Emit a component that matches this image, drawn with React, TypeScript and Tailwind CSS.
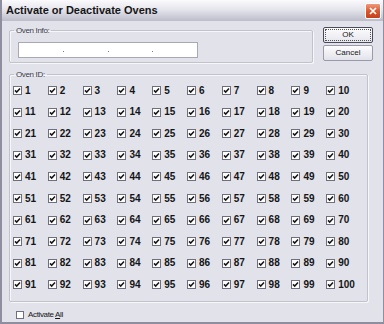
import React from "react";

const ids = Array.from({ length: 100 }, (_, i) => i + 1);

function Check({ checked, size = 9 }: { checked: boolean; size?: number }) {
  return (
    <div
      className="shrink-0 border border-[#6e6e7e] bg-white flex items-center justify-center"
      style={{ width: size, height: size }}
    >
      {checked && (
        <svg width="7" height="7" viewBox="0 0 7 7">
          <path d="M1 3.4 L2.7 5.1 L6 1.6" fill="none" stroke="#151515" strokeWidth="1.5" />
        </svg>
      )}
    </div>
  );
}

export default function App() {
  return (
    <div className="w-[384px] h-[324px] flex flex-col bg-[#e2e2ea] border-l-2 border-r border-b-2 border-[#8e8ea0] font-['Liberation_Sans',Arial,sans-serif] text-[#151515] overflow-hidden">
      {/* Title bar */}
      <div className="h-[21px] shrink-0 flex items-center justify-between pl-[4px] pr-[2px] bg-gradient-to-b from-[#fbfbfd] via-[#e2e2ea] to-[#bcbcca]">
        <span className="text-[11px] font-bold leading-none">Activate or Deactivate Ovens</span>
        <div className="w-[16px] h-[16px] rounded-[2px] border border-white bg-gradient-to-b from-[#ee9a7c] via-[#d9582f] to-[#c4401c] flex items-center justify-center">
          <svg width="8" height="8" viewBox="0 0 8 8">
            <path d="M1 1 L7 7 M7 1 L1 7" stroke="#fff" strokeWidth="1.7" />
          </svg>
        </div>
      </div>

      {/* Body */}
      <div className="flex flex-col pl-[7px]">
        {/* Top row */}
        <div className="flex items-start pt-[3px]">
          <fieldset className="w-[304px] h-[39px] border border-[#c2c2cc] rounded-[2px] shadow-[inset_1px_1px_0_#f7f7fa,1px_1px_0_#f7f7fa]">
            <legend className="ml-[4px] px-[2px] h-[12px] leading-[12px] text-[8px] tracking-[-0.35px] text-[#3a3a48]">
              <span className="relative top-[1px]">Oven Info:</span>
            </legend>
            <div className="pl-[8px] pt-[6px]">
              <div className="w-[180px] h-[16px] bg-white border border-[#a8a8b8] flex items-center">
                <div className="flex-1" />
                <div className="w-[1px] h-[1px] mt-[2px] bg-[#7a7a88]" />
                <div className="flex-1" />
                <div className="w-[1px] h-[1px] mt-[2px] bg-[#7a7a88]" />
                <div className="flex-1" />
                <div className="w-[1px] h-[1px] mt-[2px] bg-[#7a7a88]" />
                <div className="flex-1" />
              </div>
            </div>
          </fieldset>
          <div className="ml-[10px] mt-[3px] flex flex-col gap-[2px]">
            <div className="w-[50px] h-[16px] rounded-[2px] border border-[#4a4a5a] bg-gradient-to-b from-[#fdfdfe] to-[#e6e6ee] p-[1px]">
              <div className="w-full h-full border border-dotted border-[#555] flex items-center justify-center text-[8px] leading-none">
                OK
              </div>
            </div>
            <div className="w-[50px] h-[16px] rounded-[2px] border border-[#9a9aaa] bg-gradient-to-b from-[#fdfdfe] to-[#e2e2ea] flex items-center justify-center text-[8px] leading-none">
              Cancel
            </div>
          </div>
        </div>

        {/* Oven ID group */}
        <fieldset className="mt-[5px] w-[359px] h-[234px] border border-[#c2c2cc] rounded-[2px] shadow-[inset_1px_1px_0_#f7f7fa,1px_1px_0_#f7f7fa]">
          <legend className="ml-[4px] px-[2px] h-[12px] leading-[12px] text-[8px] tracking-[-0.35px] text-[#3a3a48]">
            <span className="relative top-[1px]">Oven ID:</span>
          </legend>
          <div className="pl-[3px] grid grid-cols-[repeat(10,34.8px)] auto-rows-[21.56px]">
            {ids.map((n) => (
              <div key={n} className="flex items-center gap-[3px]">
                <Check checked />
                <span className="text-[10px] font-bold leading-none">{n}</span>
              </div>
            ))}
          </div>
        </fieldset>

        {/* Activate all */}
        <div className="mt-[9px] ml-[7px] flex items-center gap-[4px] h-[8px]">
          <Check checked={false} size={8} />
          <span className="text-[8px] tracking-[-0.35px] leading-none">
            Activate <span className="underline">A</span>ll
          </span>
        </div>
      </div>
    </div>
  );
}
